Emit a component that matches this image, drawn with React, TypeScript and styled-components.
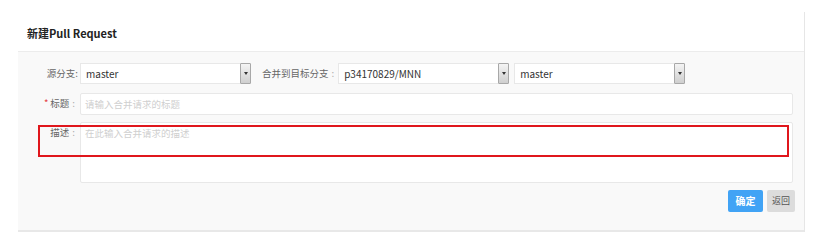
import React from "react";
import styled, { createGlobalStyle } from "styled-components";

const GlobalStyle = createGlobalStyle`
  html, body {
    margin: 0;
    padding: 0;
    background: #ffffff;
    font-family: "Noto Sans CJK SC", "Noto Sans", sans-serif;
    color: #333;
  }
`;

const Card = styled.div`
  position: relative;
  margin: 12px 0 0 18px;
  width: 787px;
  border-right: 1px solid #e6e6e6;
  box-sizing: border-box;
`;

const Header = styled.div`
  height: 40px;
  display: flex;
  align-items: center;
  padding: 0 9px;
  border-bottom: 1px solid #ececec;
  box-sizing: border-box;
`;

const Title = styled.h3`
  margin: 0;
  font-size: 11px;
  font-weight: 700;
  color: #222;
  line-height: 16px;
  padding-top: 2px;
`;

const Body = styled.div`
  background: #f9f9f9;
  padding: 11px 11px 18px 0;
  border-bottom: 2px solid #e8e8e8;
  display: flex;
  flex-direction: column;
`;

const Row = styled.div<{ $gap?: number }>`
  display: flex;
  align-items: flex-start;
  margin-bottom: ${(p) => p.$gap ?? 0}px;
`;

const Label = styled.label`
  width: 60px;
  flex-shrink: 0;
  text-align: right;
  font-size: 9.5px;
  line-height: 21px;
  color: #666;
  white-space: nowrap;
  margin-right: 2px;
`;

const InlineLabel = styled.label`
  flex-shrink: 0;
  font-size: 9.5px;
  line-height: 21px;
  color: #666;
  white-space: nowrap;
  margin: 0 1px 0 11px;
`;

const Star = styled.span`
  color: #e4393c;
  margin-right: 2px;
`;

const Colon = styled.span`
  margin: 0 3px 0 3px;
  color: #aaa;
`;

const SelectBox = styled.div<{ $ml?: number }>`
  width: 171px;
  height: 21px;
  margin-left: ${(p) => p.$ml ?? 0}px;
  display: flex;
  align-items: stretch;
  background: #fff;
  border: 1px solid #e8e8e8;
  border-right: none;
  box-sizing: border-box;
`;

const SelectText = styled.span`
  flex: 1;
  font-size: 10px;
  line-height: 19px;
  padding-left: 5px;
  color: #333;
`;

const Arrow = styled.span`
  width: 11px;
  margin: -1px 0;
  border: 1px solid #a8a8a8;
  border-radius: 1px;
  background: linear-gradient(#f4f4f4, #cfcfcf);
  box-sizing: border-box;
  display: flex;
  align-items: center;
  justify-content: center;

  &::after {
    content: "";
    border-left: 2px solid transparent;
    border-right: 2px solid transparent;
    border-top: 3px solid #333;
  }
`;

const Input = styled.div<{ $h: number }>`
  flex: 1;
  height: ${(p) => p.$h}px;
  background: #fff;
  border: 1px solid #e8e8e8;
  border-radius: 2px;
  box-sizing: border-box;
  font-size: 9.5px;
  line-height: 20px;
  padding-left: 4px;
  color: #cfcfcf;
`;

const Actions = styled.div`
  display: flex;
  justify-content: flex-end;
  gap: 4px;
  margin-right: -2px;
`;

const Button = styled.button<{ $primary?: boolean }>`
  height: 22px;
  width: ${(p) => (p.$primary ? 35 : 28)}px;
  padding: 0;
  border: none;
  border-radius: 2px;
  font-family: inherit;
  font-size: ${(p) => (p.$primary ? 10 : 9)}px;
  font-weight: ${(p) => (p.$primary ? 700 : 400)};
  line-height: 22px;
  color: ${(p) => (p.$primary ? "#fff" : "#555")};
  background: ${(p) => (p.$primary ? "#41a3f5" : "#dcdcdc")};
`;

const Highlight = styled.div`
  position: absolute;
  left: 20px;
  top: 113px;
  width: 751px;
  height: 32px;
  border: 2px solid #e0161c;
  box-sizing: border-box;
  pointer-events: none;
`;

export default function App() {
  return (
    <>
      <GlobalStyle />
      <Card>
        <Header>
          <Title>新建Pull Request</Title>
        </Header>
        <Body>
          <Row $gap={9}>
            <Label>源分支:</Label>
            <SelectBox>
              <SelectText>master</SelectText>
              <Arrow />
            </SelectBox>
            <InlineLabel>
              合并到目标分支<Colon>:</Colon>
            </InlineLabel>
            <SelectBox>
              <SelectText>p34170829/MNN</SelectText>
              <Arrow />
            </SelectBox>
            <SelectBox $ml={5}>
              <SelectText>master</SelectText>
              <Arrow />
            </SelectBox>
          </Row>
          <Row $gap={7}>
            <Label>
              <Star>*</Star>标题<Colon>:</Colon>
            </Label>
            <Input $h={22}>请输入合并请求的标题</Input>
          </Row>
          <Row $gap={7}>
            <Label>
              描述<Colon>:</Colon>
            </Label>
            <Input $h={61}>在此输入合并请求的描述</Input>
          </Row>
          <Actions>
            <Button $primary>确定</Button>
            <Button>返回</Button>
          </Actions>
        </Body>
        <Highlight />
      </Card>
    </>
  );
}
